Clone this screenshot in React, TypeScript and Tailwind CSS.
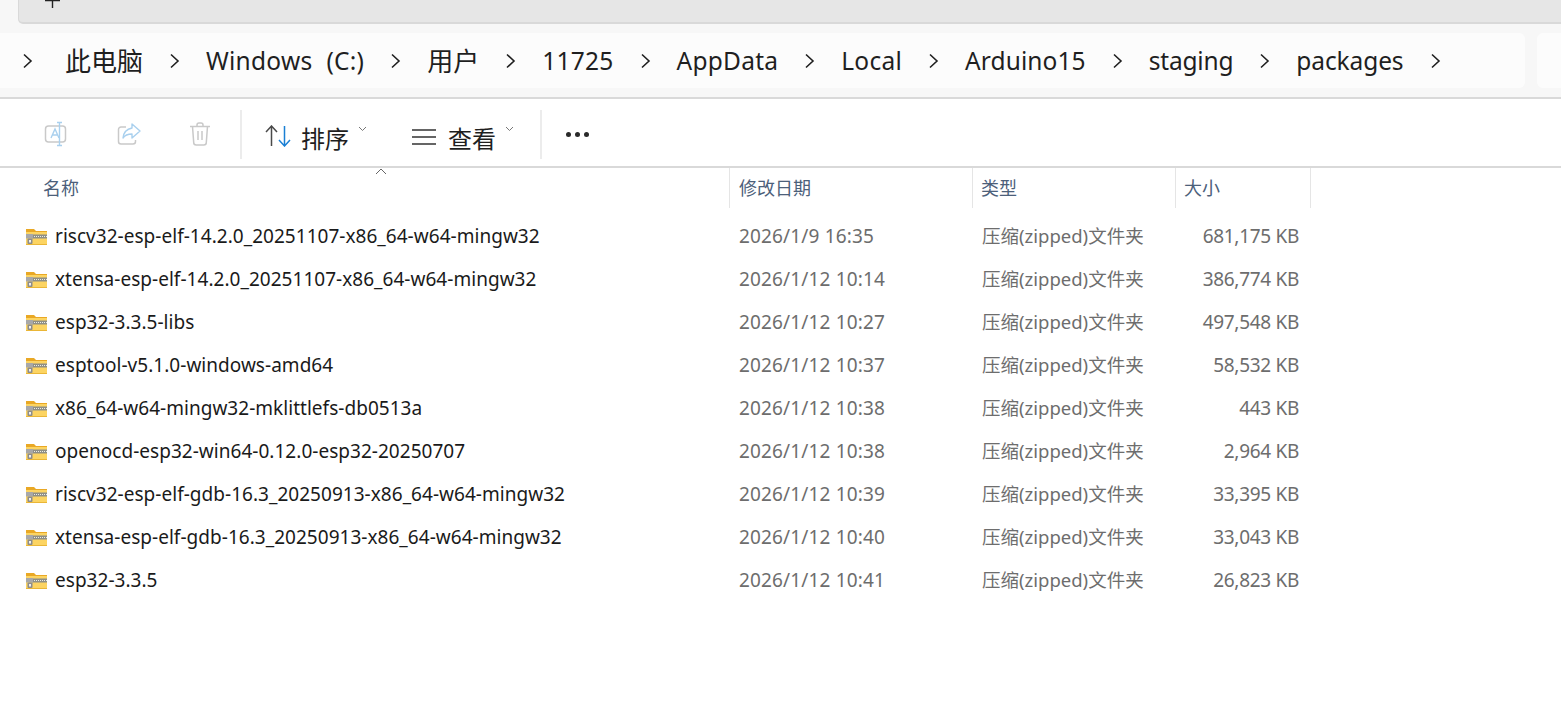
import React from "react";

const files: [string, string, string][] = [
  ["riscv32-esp-elf-14.2.0_20251107-x86_64-w64-mingw32", "2026/1/9 16:35", "681,175 KB"],
  ["xtensa-esp-elf-14.2.0_20251107-x86_64-w64-mingw32", "2026/1/12 10:14", "386,774 KB"],
  ["esp32-3.3.5-libs", "2026/1/12 10:27", "497,548 KB"],
  ["esptool-v5.1.0-windows-amd64", "2026/1/12 10:37", "58,532 KB"],
  ["x86_64-w64-mingw32-mklittlefs-db0513a", "2026/1/12 10:38", "443 KB"],
  ["openocd-esp32-win64-0.12.0-esp32-20250707", "2026/1/12 10:38", "2,964 KB"],
  ["riscv32-esp-elf-gdb-16.3_20250913-x86_64-w64-mingw32", "2026/1/12 10:39", "33,395 KB"],
  ["xtensa-esp-elf-gdb-16.3_20250913-x86_64-w64-mingw32", "2026/1/12 10:40", "33,043 KB"],
  ["esp32-3.3.5", "2026/1/12 10:41", "26,823 KB"],
];

const Chevron = () => (
  <svg width="11" height="16" viewBox="0 0 11 16" fill="none" stroke="#1f1f1f" strokeWidth="1.6" className="shrink-0">
    <path d="M2 1.500 9 8l-7 6.500" />
  </svg>
);

const SmallChevron = () => (
  <svg width="9" height="6" viewBox="0 0 9 6" fill="none" stroke="#777" strokeWidth="1" className="shrink-0">
    <path d="M1 1l3.500 3.500L8 1" />
  </svg>
);

const ZipFolder = () => (
  <svg width="23" height="18" viewBox="0 0 23 18" className="shrink-0">
    <path d="M1 1h8l2 2h11v3H1z" fill="#e9a825" />
    <rect x="1" y="4" width="21" height="13" fill="#fcd462" />
    <rect x="1" y="16" width="21" height="1" fill="#eab637" />
    <rect x="7" y="6.500" width="15" height="4" fill="#8f8f86" />
    <path d="M7 8.500h15" stroke="#ecece2" strokeWidth="1" strokeDasharray="1 1" />
    <rect x="1" y="6" width="7" height="4.500" fill="#a8a8a8" />
    <rect x="2.500" y="10.500" width="5" height="5.500" rx="1" fill="#8c8c8c" />
    <rect x="4" y="12" width="2" height="2.500" fill="#eeeeee" />
  </svg>
);

export default function App() {
  return (
    <div className="w-[1561px] h-[718px] overflow-hidden bg-white flex flex-col font-['Noto_Sans','Noto_Sans_CJK_SC',sans-serif]">
      {/* address area */}
      <div className="h-[97px] shrink-0 bg-[#f7f7f7] flex flex-col">
        <div className="h-[24px] ml-[18px] bg-[#e6e6e6] border-b-2 border-l border-[#d9d9d9] rounded-bl-[5px] pl-[26px]">
          <svg width="16" height="8" viewBox="0 0 16 8" stroke="#222" strokeWidth="1.400" className="block">
            <path d="M0 .5h15M7.500 0v8" />
          </svg>
        </div>
        <div className="mt-[9px] h-[55px] flex gap-[12px]">
          <div className="w-[1525px] bg-[#fcfcfc] rounded-r-[6px] flex items-center pl-[22px] gap-[26px] text-[24.500px] leading-none tracking-[0.25px] text-[#1f1f1f] whitespace-nowrap">
            <Chevron />
            <span className="ml-[6px] text-[26px] tracking-normal">此电脑</span>
            <Chevron />
            <span className="flex gap-[14px] mt-[2px]"><span>Windows</span><span>(C:)</span></span>
            <Chevron />
            <span className="text-[26px] tracking-normal">用户</span>
            <Chevron />
            <span className="mt-[2px]">11725</span>
            <Chevron />
            <span className="mt-[2px]">AppData</span>
            <Chevron />
            <span className="mt-[2px]">Local</span>
            <Chevron />
            <span className="mt-[2px] tracking-[0.1px]">Arduino15</span>
            <Chevron />
            <span className="mt-[2px] tracking-[-0.2px]">staging</span>
            <Chevron />
            <span className="mt-[2px] tracking-[-0.1px]">packages</span>
            <Chevron />
          </div>
          <div className="flex-1 bg-[#fcfcfc] rounded-l-[6px]" />
        </div>
      </div>

      {/* toolbar */}
      <div className="h-[71px] shrink-0 border-t-2 border-b-2 border-[#d9d9d9] flex items-center text-[24px] text-[#1f1f1f]">
        <div className="w-[242px] h-[49px] mt-[3px] border-r-2 border-[#ececec] flex items-center pl-[44px] gap-[47px]">
          <svg width="26" height="26" viewBox="0 0 26 26" fill="none" className="shrink-0">
            <rect x="1.500" y="5" width="20" height="16" rx="3" stroke="#c9c9c9" strokeWidth="1.500" />
            <path d="M7 17l4-9 4 9M8.500 14h5" stroke="#a9d0ee" strokeWidth="1.400" />
            <path d="M13 1.500h5M13 24.500h5M15.500 1.500v23" stroke="#a9d0ee" strokeWidth="1.400" />
          </svg>
          <svg width="25" height="24" viewBox="0 0 25 24" fill="none" className="shrink-0">
            <path d="M9 5H4a2.500 2.500 0 0 0-2.500 2.500v12A2.500 2.500 0 0 0 4 22h12a2.500 2.500 0 0 0 2.500-2.500V18" stroke="#c9c9c9" strokeWidth="1.500" />
            <path d="M15 2l8 7-8 7v-4c-4 0-7 1-9 4 .5-5 4-9 9-10z" stroke="#a9d0ee" strokeWidth="1.400" strokeLinejoin="round" />
          </svg>
          <svg width="20" height="24" viewBox="0 0 20 24" fill="none" stroke="#c9c9c9" strokeWidth="1.500" className="ml-[1px] shrink-0">
            <path d="M0 4.500h20M7 4.500V3a2 2 0 0 1 2-2h2a2 2 0 0 1 2 2v1.500M2.500 4.500l1.200 16a2.500 2.500 0 0 0 2.500 2.500h7.600a2.500 2.500 0 0 0 2.500-2.500l1.200-16M8 9v9M12 9v9" />
          </svg>
        </div>
        <div className="w-[300px] h-[49px] mt-[3px] border-r-2 border-[#ececec] flex items-center">
          <svg width="26" height="22" viewBox="0 0 26 22" fill="none" strokeWidth="1.500" className="ml-[23px] mt-[4px] shrink-0">
            <path d="M1 7l5.500-6L12 7M6.500 1v20" stroke="#4a4a4a" />
            <path d="M14 15l5.500 6L25 15M19.500 1v20" stroke="#1a7fd4" />
          </svg>
          <span className="ml-[10px] mt-[10px] leading-none">排序</span>
          <span className="ml-[9px] mb-[10px]"><SmallChevron /></span>
          <svg width="24" height="16" viewBox="0 0 24 16" stroke="#333" strokeWidth="1.300" className="ml-[45px] mt-[5px] shrink-0">
            <path d="M0 1h24M0 8h24M0 15h24" />
          </svg>
          <span className="ml-[12px] mt-[10px] leading-none">查看</span>
          <span className="ml-[9px] mb-[10px]"><SmallChevron /></span>
        </div>
        <div className="ml-[24px] mt-[3px] flex gap-[4px]">
          <span className="size-[5px] rounded-full bg-[#2a2a2a]" />
          <span className="size-[5px] rounded-full bg-[#2a2a2a]" />
          <span className="size-[5px] rounded-full bg-[#2a2a2a]" />
        </div>
      </div>

      {/* column headers */}
      <div className="h-[40px] shrink-0 flex text-[18px] text-[#4c607a] relative">
        <svg width="12" height="7" viewBox="0 0 12 7" fill="none" stroke="#666" strokeWidth="1" className="absolute left-[375px] top-0">
          <path d="M1 6l5-5 5 5" />
        </svg>
        <div className="w-[730px] pl-[43px] flex items-center border-r border-[#e5e5e5]">名称</div>
        <div className="w-[243px] pl-[9px] flex items-center border-r border-[#e5e5e5]">修改日期</div>
        <div className="w-[203px] pl-[8px] flex items-center border-r border-[#e5e5e5]">类型</div>
        <div className="w-[135px] pl-[8px] flex items-center border-r border-[#e5e5e5]">大小</div>
      </div>

      {/* rows */}
      <div className="flex flex-col pt-[7px]">
        {files.map(([name, date, size]) => (
          <div key={name} className="h-[43px] flex items-center text-[19px] text-[#6d6d6d] whitespace-nowrap">
            <div className="w-[730px] pl-[25px] flex items-center gap-[7px] text-[#1a1a1a]">
              <ZipFolder />
              <span className="tracking-[0.03px]">{name}</span>
            </div>
            <div className="w-[243px] pl-[9px] tracking-[0.15px]">{date}</div>
            <div className="w-[203px] pl-[9px] mb-[2px] text-[18.500px]">压缩(zipped)文件夹</div>
            <div className="w-[123px] text-right tracking-[-0.3px]">{size}</div>
          </div>
        ))}
      </div>
    </div>
  );
}
